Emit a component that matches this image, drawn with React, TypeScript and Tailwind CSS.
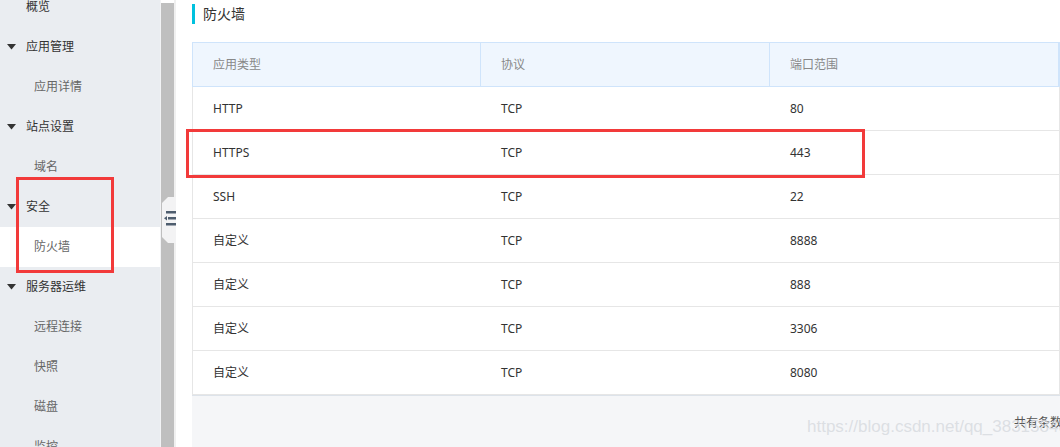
import React from "react";

const font = "font-['Noto_Sans','Noto_Sans_CJK_SC',sans-serif]";

type Item = { label: string; group?: boolean; active?: boolean };
const items: Item[] = [
  { label: "概览", group: false },
  { label: "应用管理", group: true },
  { label: "应用详情" },
  { label: "站点设置", group: true },
  { label: "域名" },
  { label: "安全", group: true },
  { label: "防火墙", active: true },
  { label: "服务器运维", group: true },
  { label: "远程连接" },
  { label: "快照" },
  { label: "磁盘" },
  { label: "监控" },
];

const rows = [
  ["HTTP", "TCP", "80"],
  ["HTTPS", "TCP", "443"],
  ["SSH", "TCP", "22"],
  ["自定义", "TCP", "8888"],
  ["自定义", "TCP", "888"],
  ["自定义", "TCP", "3306"],
  ["自定义", "TCP", "8080"],
];

function Caret() {
  return (
    <svg width="9" height="6" viewBox="0 0 9 6" className="shrink-0">
      <path d="M0 0 H9 L4.5 5.5 Z" fill="#333" />
    </svg>
  );
}

export default function App() {
  return (
    <div className={`relative flex h-[447px] w-[1060px] overflow-hidden bg-white ${font}`}>
      {/* Sidebar */}
      <div className="w-[160px] shrink-0 bg-[#eaedf1]">
        <div className="-mt-[13px] flex flex-col">
          {items.map((it, i) => {
            if (i === 0) {
              return (
                <div key={i} className="flex h-[40px] items-center pl-[26px] text-[12px] text-[#333]">
                  {it.label}
                </div>
              );
            }
            if (it.group) {
              return (
                <div key={i} className="flex h-[40px] items-center gap-[10px] pl-[7px] text-[12px] text-[#333]">
                  <Caret />
                  <span>{it.label}</span>
                </div>
              );
            }
            return (
              <div
                key={i}
                className={`flex h-[40px] items-center pl-[34px] text-[12px] text-[#666] ${
                  it.active ? "bg-white" : ""
                }`}
              >
                {it.label}
              </div>
            );
          })}
        </div>
      </div>
      {/* scrollbar strip */}
      <div className="w-[1px] shrink-0 bg-[#f2f3f5]" />
      <div className="relative w-[13px] shrink-0 pt-[3px]">
        <div className="h-full w-full bg-[#bfbfbf]" />
      </div>
      <div className="w-[2px] shrink-0 bg-[#f0f0f0]" />

      {/* Content */}
      <div className="flex min-w-0 flex-1 flex-col pl-[16px]">
        <div className="flex h-[42px] items-start pt-[4px]">
          <div className="h-[20px] w-[3px] bg-[#00c1de]" />
          <span className="ml-[8px] text-[14px] leading-[20px] text-[#333]">防火墙</span>
        </div>
        <div className="flex flex-1 flex-col">
          {/* header */}
          <div className="flex h-[45px] border border-[#cfe4fb] bg-[#eff6fe] text-[12px] text-[#888]">
            <div className="flex w-[288px] items-center border-r border-[#cfe4fb] pl-[20px]">应用类型</div>
            <div className="flex w-[289px] items-center border-r border-[#cfe4fb] pl-[20px]">协议</div>
            <div className="flex flex-1 items-center border-r border-[#cfe4fb] pl-[20px]">端口范围</div>
          </div>
          {rows.map((r, i) => (
            <div
              key={i}
              className="flex h-[44px] border-x border-b border-[#e6e6e6] text-[12px] text-[#333]"
            >
              <div className="flex w-[288px] items-center pl-[20px]">{r[0]}</div>
              <div className="flex w-[289px] items-center pl-[20px]">{r[1]}</div>
              <div className="flex flex-1 items-center pl-[20px]">{r[2]}</div>
            </div>
          ))}
          <div className="flex flex-1 items-center justify-end border-t border-[#dde3ea] bg-[#f5f6f8] pt-[3px] text-[12px] text-[#555]">
            <span className="-mr-[2px]">共有条数</span>
          </div>
        </div>
      </div>

      {/* collapse handle */}
      <div className="absolute left-[162px] top-[197px] h-[46px] w-[14px]">
        <svg width="14" height="46" viewBox="0 0 14 46">
          <path d="M0 6 L6 0 H14 V46 H6 L0 40 Z" fill="#f3f3f4" />
          <rect x="4" y="14" width="10" height="2.5" fill="#4e5d6e" />
          <rect x="6" y="20" width="8" height="2.5" fill="#4e5d6e" />
          <path d="M2 21.25 L5 19 V23.5 Z" fill="#4e5d6e" />
          <rect x="4" y="26" width="10" height="2.5" fill="#4e5d6e" />
        </svg>
      </div>

      {/* annotation boxes */}
      <div className="pointer-events-none absolute left-[16px] top-[177px] h-[96px] w-[98px] border-[3px] border-[#f23a3a]" />
      <div className="pointer-events-none absolute left-[186px] top-[129px] h-[49px] w-[679px] border-[3px] border-[#f23a3a]" />

      {/* watermark */}
      <div className="pointer-events-none absolute left-[807px] top-[414px] font-['Liberation_Sans',sans-serif] text-[17px] text-[#d6d9de]/80">
        https://blog.csdn.net/qq_38315848
      </div>
    </div>
  );
}
